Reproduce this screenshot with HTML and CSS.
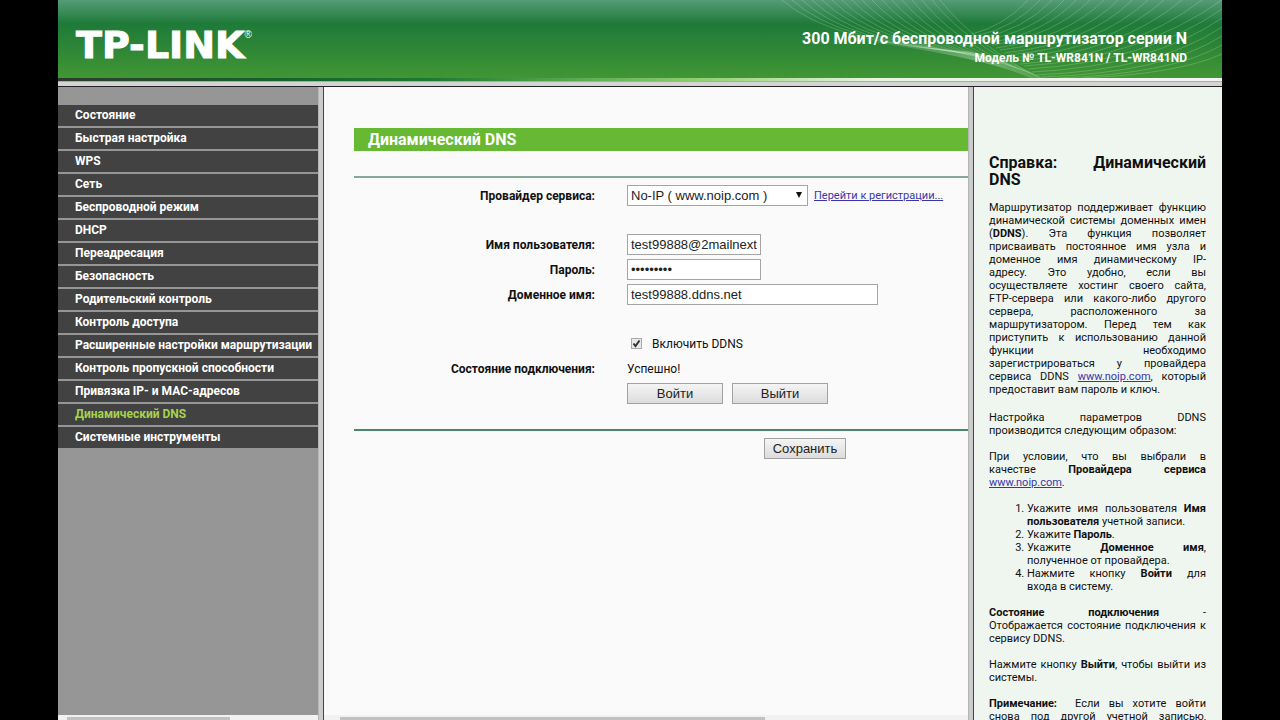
FILE: index.html
```html
<!DOCTYPE html>
<html lang="ru">
<head>
<meta charset="utf-8">
<title>TL-WR841N</title>
<link rel="stylesheet" href="styles.css">
</head>
<body>
<div class="app">
  <header class="header">
    <svg class="waves" viewBox="0 0 440 78" width="440" height="78" aria-hidden="true">
      <defs>
        <linearGradient id="band" x1="0" y1="0" x2="1" y2="0">
          <stop offset="0" stop-color="#fff" stop-opacity="0"/>
          <stop offset="0.7" stop-color="#fff" stop-opacity="0.3"/>
          <stop offset="1" stop-color="#fff" stop-opacity="0.1"/>
        </linearGradient>
      </defs>
      <path d="M60 38Q180 44 262 78L248 78Q200 56 60 38Z" fill="url(#band)"/>
      <g class="wave-lines">
        <path d="M0 0Q50 44 190 52M10 0Q58 44 194 53M20 0Q66 44 198 54M30 0Q75 44 202 55M40 0Q84 44 206 56M50 0Q93 44 210 57M60 0Q102 44 214 59M70 0Q111 44 218 60M80 0Q120 44 222 62M90 0Q129 44 226 63M100 0Q138 44 230 65M110 0Q147 44 234 67M120 0Q156 44 238 69M130 0Q165 44 243 71M140 0Q174 44 248 73M150 0Q185 44 253 75M158 0Q195 46 258 78"/>
        <path d="M190 34Q222 26 246 0M194 36Q232 28 258 0M198 38Q242 30 270 0M202 40Q252 32 282 0M206 43Q262 34 294 0M210 45Q272 36 308 0M214 48Q284 38 322 0M218 50Q296 41 336 0M222 53Q306 44 350 0M226 55Q316 47 366 0M230 58Q326 50 382 0M234 61Q336 53 400 0M238 64Q346 56 420 0M242 66Q356 59 440 0M246 69Q364 62 440 9M250 72Q370 66 440 18M254 75Q376 70 440 27M260 77Q382 73 440 36M276 78Q390 74 440 45M300 78Q396 74 440 54"/>
      </g>
    </svg>
    <div class="logo">TP-LINK<span class="reg">®</span></div>
    <div class="product">
      <div class="product-name">300 Мбит/с беспроводной маршрутизатор серии N</div>
      <div class="product-model">Модель № TL-WR841N / TL-WR841ND</div>
    </div>
  </header>
  <div class="header-line"></div>
  <div class="columns">
    <div class="pane sidebar">
      <nav class="menu">
        <a href="#">Состояние</a>
        <a href="#">Быстрая настройка</a>
        <a href="#">WPS</a>
        <a href="#">Сеть</a>
        <a href="#">Беспроводной режим</a>
        <a href="#">DHCP</a>
        <a href="#">Переадресация</a>
        <a href="#">Безопасность</a>
        <a href="#">Родительский контроль</a>
        <a href="#">Контроль доступа</a>
        <a href="#">Расширенные настройки маршрутизации</a>
        <a href="#">Контроль пропускной способности</a>
        <a href="#">Привязка IP- и MAC-адресов</a>
        <a href="#" class="active">Динамический DNS</a>
        <a href="#">Системные инструменты</a>
      </nav>
      <div class="scrollbar"><div class="thumb thumb-menu"></div></div>
    </div>
    <div class="splitter"></div>
    <main class="pane content">
      <form class="page">
        <h1 class="title">Динамический DNS</h1>
        <div class="fields">
          <div class="row">
            <label class="label" for="provider">Провайдер сервиса:</label>
            <div class="field">
              <span class="select-wrap">
                <select id="provider" class="box"><option>No-IP ( www.noip.com )</option></select>
                <span class="arrow"></span>
              </span>
              <a class="link register" href="#">Перейти к регистрации...</a>
            </div>
          </div>
          <div class="row row-gap">
            <label class="label" for="user">Имя пользователя:</label>
            <div class="field"><input id="user" class="box short" type="text" value="test99888@2mailnext"></div>
          </div>
          <div class="row">
            <label class="label" for="pass">Пароль:</label>
            <div class="field"><input id="pass" class="box short" type="password" value="123456789"></div>
          </div>
          <div class="row">
            <label class="label" for="domain">Доменное имя:</label>
            <div class="field"><input id="domain" class="box long" type="text" value="test99888.ddns.net"></div>
          </div>
          <div class="row row-gap">
            <span class="label"></span>
            <div class="field">
              <label class="check-label">
                <span class="check-wrap">
                  <input class="check" type="checkbox" checked>
                  <svg class="tick" viewBox="0 0 11 11" width="11" height="11" aria-hidden="true"><path d="M2.5 5.5L4.5 8L8.5 2.5" fill="none" stroke="#333" stroke-width="2"/></svg>
                </span>
                Включить DDNS
              </label>
            </div>
          </div>
          <div class="row">
            <span class="label">Состояние подключения:</span>
            <div class="field">Успешно!</div>
          </div>
          <div class="row">
            <span class="label"></span>
            <div class="field buttons">
              <button type="button" class="button action">Войти</button>
              <button type="button" class="button action">Выйти</button>
            </div>
          </div>
        </div>
        <div class="footer"><button type="button" class="button save">Сохранить</button></div>
      </form>
      <div class="scrollbar"><div class="thumb thumb-content"></div></div>
    </main>
    <div class="splitter"></div>
    <aside class="pane help">
      <h2>Справка: Динамический DNS</h2>
      <p class="intro"><span class="full">Маршрутизатор поддерживает функцию<br>
        динамической системы доменных имен<br>
        (<b>DDNS</b>). Эта функция позволяет<br>
        присваивать постоянное имя узла и<br>
        доменное имя динамическому IP-<br>
        адресу. Это удобно, если вы<br>
        осуществляете хостинг своего сайта,<br>
        FTP-сервера или какого-либо другого<br>
        сервера, расположенного за<br>
        маршрутизатором. Перед тем как<br>
        приступить к использованию данной<br>
        функции необходимо<br>
        зарегистрироваться у провайдера<br>
        сервиса DDNS <a class="link" href="#">www.noip.com</a>, который</span>
        предоставит вам пароль и ключ.</p>
      <p>Настройка параметров DDNS производится следующим образом:</p>
      <p><span class="full">При условии, что вы выбрали в<br>
        качестве <b>Провайдера сервиса</b></span>
        <a class="link" href="#">www.noip.com</a>.</p>
      <ol>
        <li>Укажите имя пользователя <b>Имя пользователя</b> учетной записи.</li>
        <li>Укажите <b>Пароль</b>.</li>
        <li>Укажите <b>Доменное имя</b>, полученное от провайдера.</li>
        <li><span class="full">Нажмите кнопку <b>Войти</b> для</span> входа в систему.</li>
      </ol>
      <p><span class="full"><b>Состояние подключения</b> -<br>
        Отображается состояние подключения к</span>
        сервису DDNS.</p>
      <p>Нажмите кнопку <b>Выйти</b>, чтобы выйти из системы.</p>
      <p><b>Примечание:</b>&nbsp; Если вы хотите войти снова под другой учетной записью, нажмите кнопку <b>Выйти</b>.</p>
    </aside>
  </div>
</div>
</body>
</html>
```
FILE: styles.css
```css
* {
  box-sizing: border-box;
}

body {
  margin: 0;
  background: #000;
  font-family: Roboto, "Liberation Sans", Arial, sans-serif;
  font-size: 12px;
  color: #111;
}

.app {
  display: flex;
  flex-direction: column;
  height: 100vh;
  margin: 0 58px;
  overflow: hidden;
}

.header {
  position: relative;
  display: flex;
  flex: none;
  justify-content: space-between;
  height: 78px;
  padding: 28px 35px 0 18px;
  background: linear-gradient(#559b78 0, #1e7a38 24px, #419634 78px);
  color: #fff;
}

.waves {
  position: absolute;
  top: 0;
  right: 0;
}

.wave-lines {
  fill: none;
  stroke: #cfeecf;
  stroke-opacity: 0.24;
}

.logo {
  position: relative;
  display: flex;
  font: bold 38px/34px "DejaVu Sans", sans-serif;
  -webkit-text-stroke: 1px #fff;
}

.reg {
  font: 10px/14px "Liberation Sans", sans-serif;
  -webkit-text-stroke: 0;
}

.product {
  position: relative;
  font-weight: bold;
  text-align: right;
}

.product-name {
  font-size: 16px;
  line-height: 21px;
}

.product-model {
  line-height: 19px;
}

.header-line {
  flex: none;
  height: 9px;
  border-bottom: 1px solid #222;
  background:
    linear-gradient(90deg, #2d3b2c 0, #17642a 20%, #1e7a30 32%, #8fcf72 55%, #e6f6df 70%, #f4f4f4 100%) top / 100% 3px no-repeat,
    linear-gradient(#aaa 0, #aaa 4px, #d4d4d4 4px);
}

.columns {
  display: grid;
  flex: 1;
  grid-template-columns: 260px 6px minmax(0, 1fr) 6px 248px;
  min-height: 0;
}

.pane {
  display: flex;
  flex-direction: column;
  min-height: 0;
  overflow: hidden;
}

.splitter {
  border-right: 1px solid #444;
  border-left: 1px solid #b4b4b4;
  background: #ccc;
}

.sidebar {
  padding-top: 18px;
  background: #969696;
}

.menu {
  display: flex;
  flex: 1;
  flex-direction: column;
  gap: 2px;
}

.menu a {
  padding-left: 17px;
  background: #424242;
  color: #fff;
  font-weight: bold;
  line-height: 21px;
  text-decoration: none;
  white-space: nowrap;
}

.menu .active {
  color: #a6d24e;
}

.scrollbar {
  flex: none;
  height: 5px;
  padding-top: 2px;
  background: #f1f1f1;
}

.thumb {
  height: 3px;
  background: #c1c1c1;
}

.thumb-menu {
  width: 163px;
  margin-left: 9px;
}

.thumb-content {
  width: 66%;
  margin-left: 16px;
}

.content {
  background: #fafafa;
}

.page {
  flex: 1;
  width: 932px;
  padding: 41px 0 0 30px;
}

.title {
  margin: 0 0 25px;
  padding-left: 14px;
  background: #67b934;
  color: #fff;
  font-size: 16px;
  line-height: 23px;
}

.fields {
  display: flex;
  flex-direction: column;
  gap: 4px;
  padding: 7px 0 25px;
  border-top: 2px solid #86a898;
  border-bottom: 2px solid #4d846c;
}

.row {
  display: grid;
  grid-template-columns: 241px minmax(0, 1fr);
  column-gap: 32px;
  align-items: center;
  height: 21px;
}

.row-gap {
  margin-top: 24px;
}

.label {
  font-weight: bold;
  text-align: right;
}

.field,
.buttons {
  display: flex;
  align-items: center;
}

.box {
  height: 21px;
  margin: 0;
  padding: 0 3px;
  border: 1px solid #a5a5a5;
  border-radius: 0;
  background: #fff;
  color: #222;
  font: 13px "Liberation Sans", Arial, sans-serif;
}

.short {
  width: 134px;
}

.long {
  width: 251px;
}

.select-wrap {
  position: relative;
  display: flex;
  margin-right: 6px;
}

.select-wrap .box {
  width: 181px;
  appearance: none;
}

.arrow {
  position: absolute;
  top: 7px;
  right: 6px;
  border: 3px solid transparent;
  border-top: 6px solid #111;
  border-bottom: 0;
  pointer-events: none;
}

.link {
  color: #3a35a8;
  text-decoration: underline;
}

.register {
  font-size: 11px;
}

.check-label {
  display: flex;
  align-items: center;
  gap: 10px;
  padding-left: 4px;
}

.check-wrap {
  position: relative;
  display: flex;
}

.check {
  width: 11px;
  height: 11px;
  margin: 0;
  border: 1px solid #aaa;
  background: #e8e8e8;
  appearance: none;
}

.tick {
  position: absolute;
  inset: 0;
  pointer-events: none;
}

.buttons {
  gap: 9px;
}

.button {
  height: 21px;
  padding: 0;
  border: 1px solid #a2a2a2;
  border-radius: 0;
  background: linear-gradient(#f4f4f4, #dcdcdc);
  color: #222;
  font: 13px "Liberation Sans", Arial, sans-serif;
}

.action {
  width: 96px;
}

.footer {
  padding-top: 7px;
  text-align: center;
}

.save {
  width: 82px;
}

.help {
  display: block;
  padding: 67px 16px 0 15px;
  background: #eff6f0;
  font-size: 11px;
  line-height: 13px;
  text-align: justify;
}

.help h2 {
  margin: 0 0 13px;
  font-size: 16px;
  line-height: 17px;
}

.help p {
  margin: 0 0 13px;
}

.help .intro {
  margin-bottom: 15px;
}

.help ol {
  margin: 0 0 13px;
  padding-left: 38px;
}

.full {
  display: block;
  text-align-last: justify;
}
```
